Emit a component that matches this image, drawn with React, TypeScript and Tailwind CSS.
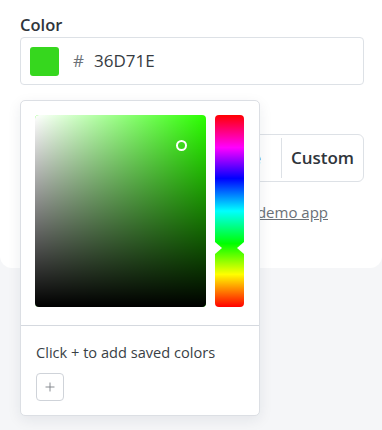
import { Plus } from 'lucide-react'

const font = { fontFamily: '"Open Sans", "Liberation Sans", sans-serif' }

function SaturationBox() {
  return (
    <div className="relative h-[192px] w-[171px] overflow-hidden rounded-[4px] bg-[#2bff00]">
      <div className="absolute inset-0 bg-gradient-to-r from-white to-transparent" />
      <div className="absolute inset-0 bg-gradient-to-t from-black to-transparent" />
      <div className="absolute left-[141px] top-[25px] h-[11px] w-[11px] rounded-full border-2 border-white" />
    </div>
  )
}

function HueBar() {
  return (
    <div className="relative h-[192px] w-[29px] rounded-[4px] bg-[linear-gradient(to_bottom,#ff0000_0%,#ff00ff_17%,#0000ff_33%,#00ffff_50%,#00ff00_67%,#ffff00_83%,#ff0000_100%)]">
      <div className="absolute left-0 top-[127px] h-0 w-0 border-y-[6px] border-l-[7px] border-y-transparent border-l-white" />
      <div className="absolute right-0 top-[127px] h-0 w-0 border-y-[6px] border-r-[7px] border-y-transparent border-r-white" />
    </div>
  )
}

export default function App() {
  return (
    <div className="min-h-screen bg-[#f5f6f8]" style={font}>
      <div className="relative rounded-b-[12px] bg-white pb-[45px] pl-5 pr-[18px] pt-[14px]">
        <label className="block text-[16.5px] font-semibold leading-[22px] text-[#2f353b]">Color</label>
        <div className="mt-[1px] flex h-[48px] items-center rounded-[4px] border border-[#dde1e6] px-[9px]">
          <div className="h-[29px] w-[29px] rounded-[3px] bg-[#36D71E]" />
          <span className="ml-[14px] text-[17px] text-[#6b7178]">#</span>
          <span className="ml-[10px] text-[17px] text-[#363b41]">36D71E</span>
        </div>

        <div className="mt-[49px] flex h-[48px] rounded-[6px] border border-[#dde1e6] text-[17px] font-semibold text-[#2f353b]">
          <div className="flex flex-1 items-center justify-center">Preset</div>
          <div className="my-[3px] w-px bg-[#dde1e6]" />
          <div className="flex w-[112px] items-center justify-end pr-5">Palette</div>
          <div className="my-[3px] w-px bg-[#dde1e6]" />
          <div className="flex w-[81px] items-center justify-center">Custom</div>
        </div>

        <p className="mt-[19px] text-right text-[15px] leading-[22px] text-[#6b7178]">
          Try it in the <span className="underline">demo app</span>
          <span className="inline-block w-[36px]" />
        </p>

        <div className="absolute left-[20px] top-[100px] w-[240px] rounded-[5px] border border-[#dcdfe4] bg-white shadow-[0_4px_14px_rgba(30,40,60,0.08)]">
          <div className="flex gap-[9px] px-[14px] pb-[18px] pt-[14px]">
            <SaturationBox />
            <HueBar />
          </div>
          <div className="border-t border-[#d5d9df] px-[15px] pb-[14px] pt-[16px]">
            <p className="text-[14.6px] leading-[20px] text-[#3a3f46]">Click + to add saved colors</p>
            <button className="mt-[11px] flex h-[28px] w-[28px] items-center justify-center rounded-[4px] border border-[#cfd3d9] text-[#777c83]">
              <Plus size={14} strokeWidth={1.5} />
            </button>
          </div>
        </div>
      </div>
    </div>
  )
}
